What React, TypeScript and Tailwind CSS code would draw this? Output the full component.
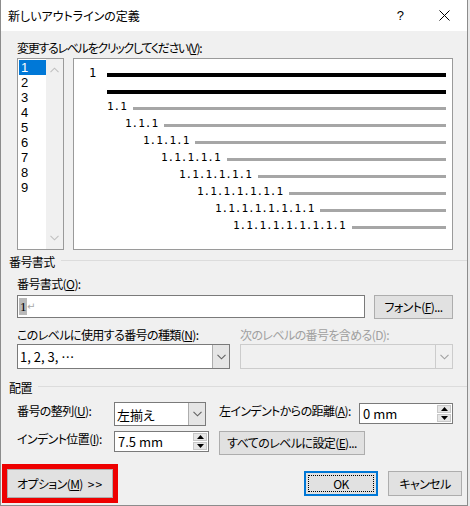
import React from "react";

const jp = "font-['Noto_Sans_CJK_JP',sans-serif] [font-feature-settings:'palt']";

function Chevron({ down = true, color = "#606060" }: { down?: boolean; color?: string }) {
  return (
    <svg width="9" height="6" viewBox="0 0 9 6">
      <path
        d={down ? "M0.5 0.8 L4.5 4.8 L8.5 0.8" : "M0.5 5.2 L4.5 1.2 L8.5 5.2"}
        fill="none"
        stroke={color}
        strokeWidth="1.1"
      />
    </svg>
  );
}

function Select({ value, width, disabled }: { value: string; width: string; disabled?: boolean }) {
  return (
    <div
      className={`${width} h-[25px] flex border ${
        disabled ? "border-[#cccccc] bg-[#f0f0f0]" : "border-[#7a7a7a] bg-white"
      }`}
    >
      <div className="flex-1 flex items-center pl-[2px] text-[13px] leading-none text-black tracking-normal">{value}</div>
      <div
        className={`w-[17px] flex items-center justify-center border-l ${
          disabled ? "border-[#cccccc] bg-[#f0f0f0]" : "border-[#adadad] bg-[#e5e5e5]"
        }`}
      >
        <Chevron color={disabled ? "#a0a0a0" : "#606060"} />
      </div>
    </div>
  );
}

function Spin({ value, width }: { value: string; width: string }) {
  return (
    <div className={`${width} h-[21px] flex border border-[#7a7a7a] bg-white`}>
      <div className="flex-1 flex items-center pl-[3px] text-[13px] leading-none tracking-normal">{value}</div>
      <div className="w-[15px] flex flex-col gap-[1px] py-[1px] pr-[1px]">
        <div className="flex-1 flex items-center justify-center bg-[#e6e6e6] border border-[#c8c8c8]">
          <svg width="7" height="4" viewBox="0 0 7 4">
            <path d="M0 4 L3.5 0 L7 4 Z" fill="#000" />
          </svg>
        </div>
        <div className="flex-1 flex items-center justify-center bg-[#e6e6e6] border border-[#c8c8c8]">
          <svg width="7" height="4" viewBox="0 0 7 4">
            <path d="M0 0 L3.5 4 L7 0 Z" fill="#000" />
          </svg>
        </div>
      </div>
    </div>
  );
}

function Button({ children, className = "" }: { children: React.ReactNode; className?: string }) {
  return (
    <div
      className={`h-[24px] flex items-center justify-center bg-[#e1e1e1] border border-[#adadad] text-[12px] leading-none text-black whitespace-nowrap ${className}`}
    >
      {children}
    </div>
  );
}

function GroupHeader({ title }: { title: string }) {
  return (
    <div className="flex items-center h-[16px] -ml-[8px]">
      <span className="text-[12px] leading-[16px]">{title}</span>
      <div className="flex-1 h-px bg-[#dcdcdc] ml-[6px] mb-[4px] -mr-[14px]" />
    </div>
  );
}

const levels = [
  "1.1",
  "1.1.1",
  "1.1.1.1",
  "1.1.1.1.1",
  "1.1.1.1.1.1",
  "1.1.1.1.1.1.1",
  "1.1.1.1.1.1.1.1",
  "1.1.1.1.1.1.1.1.1",
];

export default function App() {
  return (
    <div className={`w-[470px] h-[506px] bg-[#e9e9e9] ${jp} text-black tracking-[-0.6px]`}>
      <div className="w-[468px] h-[506px] flex flex-col bg-[#f0f0f0] border-l border-r border-b border-[#8c8c8c]">
        {/* title bar */}
        <div className="h-[31px] bg-white flex items-center pl-[7px] shrink-0">
          <span className="text-[12px] leading-none flex-1 tracking-normal">新しいアウトラインの定義</span>
          <span className="w-[14px] text-center text-[13px] leading-none font-['Liberation_Sans',sans-serif] mr-[32px]">?</span>
          <svg width="11" height="11" viewBox="0 0 11 11" className="mr-[17px]">
            <path d="M0.5 0.5 L10.5 10.5 M10.5 0.5 L0.5 10.5" stroke="#000" strokeWidth="1" />
          </svg>
        </div>

        <div className="pl-[16px] pr-[14px] pt-[9px] flex flex-col">
          <div className="text-[12px] leading-[16px] tracking-[-1.3px] whitespace-nowrap">
            変更するレベルをクリックしてください(<span className="underline">V</span>):
          </div>

          <div className="mt-[2px] flex gap-[9px] h-[192px]">
            {/* level list */}
            <div className="w-[47px] border border-[#9a9a9a] bg-white flex">
              <div className="flex-1 pt-[1px] pl-[1px] font-['Liberation_Sans',sans-serif] tracking-normal">
                {["1", "2", "3", "4", "5", "6", "7", "8", "9"].map((n, i) => (
                  <div
                    key={n}
                    className={`h-[15px] pl-[2px] text-[13px] leading-[15px] ${
                      i === 0 ? "bg-[#0078d7] text-white" : "text-black"
                    }`}
                  >
                    {n}
                  </div>
                ))}
              </div>
              <div className="w-[17px] bg-[#f0f0f0] flex flex-col items-center justify-between py-[8px]">
                <Chevron down={false} color="#c0c0c0" />
                <Chevron color="#c0c0c0" />
              </div>
            </div>

            {/* preview */}
            <div className="flex-1 border border-[#9a9a9a] bg-white pt-[7px] pr-[6px] font-['DejaVu_Sans_Mono',monospace] text-[11px] leading-none tracking-normal">
              <div className="h-[17px] flex items-center pl-[15px]">
                <span className="w-[18px] mb-[4px] text-[12px]">1</span>
                <div className="flex-1 h-[4px] bg-black" />
              </div>
              <div className="h-[17px] flex items-center pl-[33px]">
                <div className="flex-1 h-[4px] bg-black" />
              </div>
              {levels.map((l, i) => (
                <div key={l} className="h-[17px] flex items-center" style={{ paddingLeft: 33 + i * 18 }}>
                  <span className="mb-[4px] whitespace-pre">{l}</span>
                  <div className="flex-1 h-[3px] ml-[6px] bg-[#a6a6a6]" />
                </div>
              ))}
            </div>
          </div>

          <div className="mt-[4px]">
            <GroupHeader title="番号書式" />
          </div>

          <div className="mt-[6px] text-[12px] leading-[16px]">
            番号書式(<span className="underline">O</span>):
          </div>
          <div className="mt-[3px] flex gap-[9px] items-start">
            <div className="flex-1 h-[23px] border border-[#7a7a7a] bg-white flex items-center pl-[1px]">
              <span className="bg-[#b9b9b9] px-[1px] text-[13px] leading-[17px] font-['Liberation_Serif',serif]">1</span>
              <span className="text-[10px] text-[#a8a8a8] leading-none font-['DejaVu_Sans',sans-serif]">↵</span>
            </div>
            <Button className="w-[79px]">
              フォント(<span className="underline">F</span>)...
            </Button>
          </div>

          <div className="mt-[8px] grid grid-cols-2 gap-x-[10px]">
            <div className="text-[12px] leading-[16px] whitespace-nowrap">
              このレベルに使用する番号の種類(<span className="underline">N</span>):
            </div>
            <div className="text-[12px] leading-[16px] text-[#a0a0a0] whitespace-nowrap">次のレベルの番号を含める(D):</div>
            <div className="mt-[1px]">
              <Select value="1, 2, 3, …" width="w-full" />
            </div>
            <div className="mt-[1px]">
              <Select value="" width="w-full" disabled />
            </div>
          </div>

          <div className="mt-[11px]">
            <GroupHeader title="配置" />
          </div>

          <div className="mt-[6px] flex items-start h-[24px]">
            <div className="w-[97px] mt-[1px] text-[12px] leading-[16px] whitespace-nowrap">
              番号の整列(<span className="underline">U</span>):
            </div>
            <div className="w-[92px] [&>div]:h-[24px]">
              <Select value="左揃え" width="w-[92px]" />
            </div>
            <div className="ml-[13px] flex-1 mt-[1px] text-[12px] leading-[16px] whitespace-nowrap">
              左インデントからの距離(<span className="underline">A</span>):
            </div>
            <div className="mt-[1px]">
              <Spin value="0 mm" width="w-[94px]" />
            </div>
          </div>

          <div className="mt-[5px] flex items-start h-[24px]">
            <div className="w-[97px] text-[12px] leading-[16px] whitespace-nowrap">
              インデント位置(<span className="underline">I</span>):
            </div>
            <Spin value="7.5 mm" width="w-[95px]" />
            <Button className="ml-[10px] w-[146px]">
              すべてのレベルに設定(<span className="underline">E</span>)...
            </Button>
          </div>
        </div>

        <div className="mt-[9px] pl-[1px] pr-[5px] flex items-center">
          <div className="w-[116px] h-[39px] border-[5px] border-[#ee0000] flex">
            <Button className="flex-1 h-full">
              オプション(<span className="underline">M</span>)<span className="ml-[5px] tracking-[1px]">&gt;&gt;</span>
            </Button>
          </div>
          <div className="flex-1" />
          <div className="w-[74px] h-[25px] border-2 border-[#0078d7] bg-[#e1e1e1] p-[2px]">
            <div className="w-full h-full border border-dotted border-black flex items-center justify-center text-[12px] leading-none">
              OK
            </div>
          </div>
          <Button className="ml-[10px] w-[74px] h-[25px]">キャンセル</Button>
        </div>
      </div>
    </div>
  );
}
